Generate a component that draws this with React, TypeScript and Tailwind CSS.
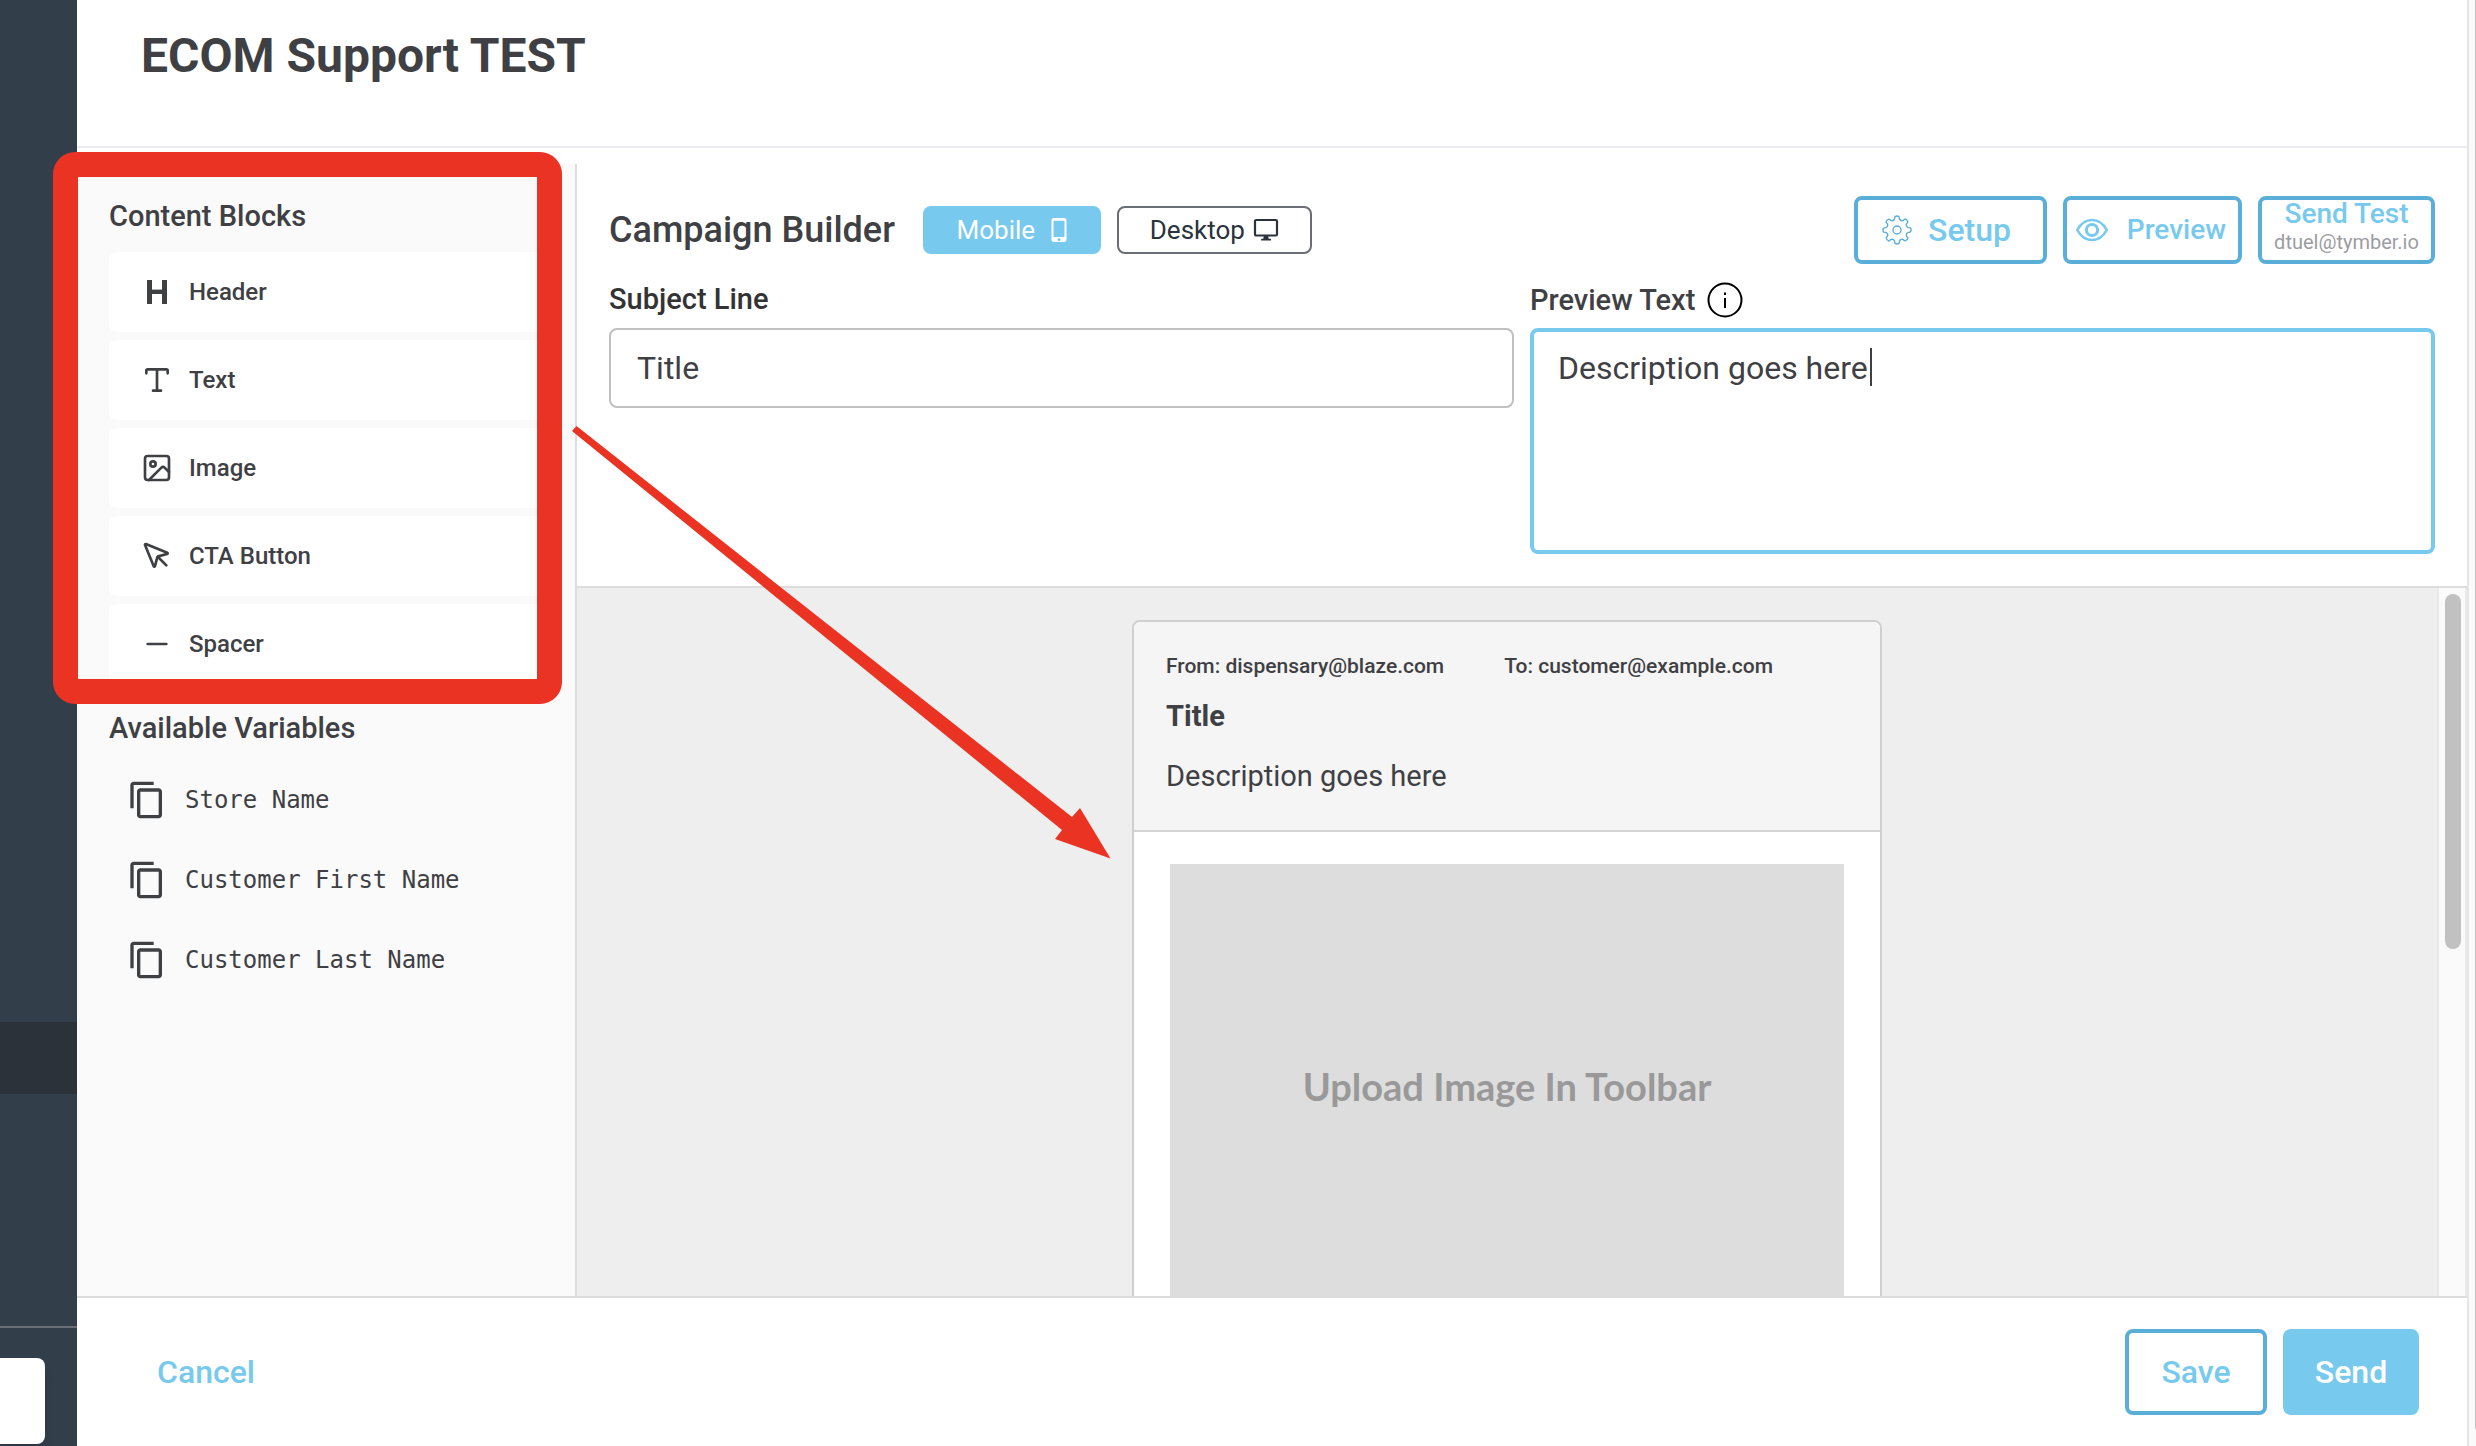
import React from "react";
import { Image as ImageIcon, Minus, MousePointer, Type } from "lucide-react";
import { MdContentCopy } from "react-icons/md";

function HeaderIcon() {
  return (
    <svg viewBox="0 0 32 32" className="size-8" fill="none" stroke="currentColor" aria-hidden="true">
      <path d="M8.5 4v24M23.5 4v24" strokeWidth="5" />
      <path d="M8 15.8h16" strokeWidth="4.4" />
    </svg>
  );
}

function PhoneIcon() {
  return (
    <svg viewBox="0 0 16 24" className="h-6 w-4" aria-hidden="true">
      <path
        fill="currentColor"
        fillRule="evenodd"
        d="M3 0h10a2.5 2.5 0 0 1 2.500 2.500v19a2.500 2.500 0 0 1-2.500 2.500H3a2.500 2.500 0 0 1-2.500-2.500v-19A2.500 2.500 0 0 1 3 0ZM3.200 2.800a.7.7 0 0 0-.7.7v14.700c0 .400.300.700.700.700h9.600a.7.7 0 0 0 .7-.7V3.500a.7.7 0 0 0-.7-.7ZM8 20a1.500 1.500 0 1 0 0 3 1.500 1.500 0 0 0 0-3Z"
      />
    </svg>
  );
}

function MonitorIcon() {
  return (
    <svg viewBox="0 0 26 24" className="h-6 w-[26px]" aria-hidden="true">
      <rect x="2" y="2" width="22" height="15.500" rx="1.200" fill="none" stroke="currentColor" strokeWidth="2.200" />
      <path d="M10.800 18h4.400l.5 2.800h1.800q.6 0 .6.700v1h-10v-1q0-.7.6-.7h1.600Z" fill="currentColor" />
    </svg>
  );
}

function gearOutline(): string {
  const at = (deg: number, r: number) => {
    const a = (deg * Math.PI) / 180;
    return `${(15 + r * Math.cos(a)).toFixed(2)} ${(15 + r * Math.sin(a)).toFixed(2)}`;
  };
  let d = `M${at(-9, 13.6)}`;
  for (let i = 0; i < 8; i++) {
    const a = i * 45;
    d += `Q${at(a, 14.6)} ${at(a + 8, 13.6)}`;
    d += `Q${at(a + 11, 12.6)} ${at(a + 12, 11.4)}`;
    d += `Q${at(a + 22.5, 9.4)} ${at(a + 33, 11.4)}`;
    d += `Q${at(a + 34, 12.6)} ${at(a + 36, 13.6)}`;
  }
  return d + "Z";
}

const gearPath = gearOutline();

function GearIcon() {
  return (
    <svg viewBox="0 0 30 30" className="size-[30px] text-[#5aafd9]" fill="none" stroke="currentColor" strokeWidth="1.400" aria-hidden="true">
      <path d={gearPath} strokeLinejoin="round" />
      <circle cx="15" cy="15" r="4" />
    </svg>
  );
}

function EyeIcon() {
  return (
    <svg viewBox="0 0 34 24" className="h-6 w-[34px]" fill="none" stroke="currentColor" aria-hidden="true">
      <path
        d="M2.200 12C5.800 5.400 11 2 17 2s11.200 3.400 14.800 10C28.200 18.600 23 22 17 22S5.800 18.600 2.200 12Z"
        strokeWidth="2.600"
        strokeLinejoin="round"
      />
      <circle cx="17" cy="12" r="5.600" strokeWidth="3" />
    </svg>
  );
}

function InfoIcon() {
  return (
    <svg viewBox="0 0 36 36" className="size-9 text-black" fill="none" stroke="currentColor" aria-hidden="true">
      <circle cx="18" cy="18" r="16.500" strokeWidth="2" />
      <path d="M18 16v10" strokeWidth="2" />
      <path d="M18 10.500v2.400" strokeWidth="2" />
    </svg>
  );
}

const blocks = [
  { label: "Header", icon: <HeaderIcon /> },
  { label: "Text", icon: <Type className="size-8" /> },
  { label: "Image", icon: <ImageIcon className="size-8" /> },
  { label: "CTA Button", icon: <MousePointer className="size-8" /> },
  { label: "Spacer", icon: <Minus className="size-8" /> },
];

const variables = ["Store Name", "Customer First Name", "Customer Last Name"];

function Rail() {
  return (
    <nav aria-label="Main" className="flex w-[77px] shrink-0 flex-col justify-end bg-[#333e4b]">
      <div className="h-[72px] bg-[#2c3239]" />
      <div className="h-[232px]" />
      <div className="border-t-2 border-[#686f79] pt-[30px] pb-0.5">
        <div className="h-[86px] w-[45px] rounded-r-lg bg-white shadow-lg" />
      </div>
    </nav>
  );
}

function Sidebar() {
  return (
    <aside className="w-[500px] shrink-0 border-r-2 border-[#dddddd] bg-[#fafafa] px-8 pt-9">
      <h2 className="mb-5 text-[29px] leading-8 font-medium">Content Blocks</h2>
      <ul className="flex flex-col gap-2">
        {blocks.map((b) => (
          <li key={b.label}>
            <button type="button" className="flex h-20 w-full cursor-grab items-center gap-4 rounded-lg bg-white pl-8 text-2xl font-medium">
              {b.icon}
              {b.label}
            </button>
          </li>
        ))}
      </ul>
      <h2 className="mt-7 mb-4 text-[29px] leading-8 font-medium">Available Variables</h2>
      <ul>
        {variables.map((v) => (
          <li key={v}>
            <button
              type="button"
              className="flex h-20 items-center gap-[18px] pl-[18px] font-['DejaVu_Sans_Mono',monospace] text-2xl"
            >
              <MdContentCopy className="size-10" />
              {v}
            </button>
          </li>
        ))}
      </ul>
    </aside>
  );
}

function Toolbar() {
  const outlined = "flex h-full items-center rounded-lg border-4 border-[#5aafd9] font-medium text-[#78c9ee]";
  return (
    <div className="flex h-[68px] items-center">
      <h2 className="mr-7 text-4xl leading-10 font-medium">Campaign Builder</h2>
      <div className="flex gap-4">
        <button type="button" aria-pressed="true" className="flex h-12 w-[178px] items-center justify-center gap-4 rounded-lg bg-[#78c9ee] text-[26px] text-white">
          Mobile
          <PhoneIcon />
        </button>
        <button type="button" aria-pressed="false" className="flex h-12 w-[195px] items-center justify-center gap-2 rounded-lg border-2 border-[#6a6d73] text-[26px] text-[#2a333c]">
          Desktop
          <MonitorIcon />
        </button>
      </div>
      <div className="ml-auto flex h-full gap-4">
        <button type="button" className={`${outlined} w-[193px] gap-4 pl-6 text-[32px]`}>
          <GearIcon />
          Setup
        </button>
        <button type="button" className={`${outlined} w-[179px] justify-between pr-3 pl-2 text-[28px]`}>
          <EyeIcon />
          Preview
        </button>
        <button type="button" className={`${outlined} w-[177px] flex-col text-[28px] leading-7`}>
          Send Test
          <span className="text-xl leading-7 font-normal text-[#9b9da2]">dtuel@tymber.io</span>
        </button>
      </div>
    </div>
  );
}

function Fields() {
  return (
    <div className="mt-5 grid grid-cols-2 gap-4">
      <div>
        <label htmlFor="subject" className="mb-3 flex h-8 items-center text-[29px] font-medium text-[#333333]">
          Subject Line
        </label>
        <input
          id="subject"
          type="text"
          defaultValue="Title"
          className="h-20 w-full rounded-lg border-2 border-[#c0c0c0] px-[26px] text-[32px] outline-none"
        />
      </div>
      <div>
        <div className="mb-3 flex h-8 items-center gap-3">
          <label htmlFor="preview" className="text-[29px] leading-8 font-medium">
            Preview Text
          </label>
          <InfoIcon />
        </div>
        <div className="relative">
          <textarea
            id="preview"
            defaultValue="Description goes here"
            className="block h-[226px] w-full resize-none rounded-lg border-4 border-[#78c9ee] px-6 py-4 text-[32px] leading-10 outline-none"
          />
          <span aria-hidden="true" className="absolute top-5 left-[340px] h-[38px] w-0.5 bg-[#3f4044]" />
        </div>
      </div>
    </div>
  );
}

function Canvas() {
  return (
    <div className="flex min-h-0 flex-1 bg-[#eeeeee]">
      <div className="flex-1 overflow-hidden pt-8">
        <article className="mx-auto w-[750px] rounded-t-lg border-2 border-[#cfcfcf] bg-white">
          <header className="rounded-t-md border-b-2 border-[#d4d4d4] bg-[#f5f5f5] px-8 pt-8 pb-[38px]">
            <div className="flex gap-15 text-[21px] leading-6 font-medium">
              <span>From: dispensary@blaze.com</span>
              <span>To: customer@example.com</span>
            </div>
            <h3 className="mt-[22px] text-[29px] leading-8 font-bold">Title</h3>
            <p className="mt-7 text-[29px] leading-8">Description goes here</p>
          </header>
          <div className="px-9 py-8">
            <div className="flex h-[444px] items-center justify-center bg-[#dddddd] font-[Lato,sans-serif] text-[38px] font-bold text-[#999999]">
              Upload Image In Toolbar
            </div>
          </div>
        </article>
      </div>
      <div className="w-[30px] shrink-0 border-x-2 border-[#e8e8e8] bg-[#fafafa] px-[6px] pt-1.5">
        <div className="h-[355px] w-4 rounded-full bg-[#c1c1c1]" />
      </div>
    </div>
  );
}

function Annotations() {
  return (
    <div aria-hidden="true" className="pointer-events-none">
      <div className="absolute top-[152px] left-[53px] h-[552px] w-[509px] rounded-[22px] border-[25px] border-[#ea3323]" />
      <svg viewBox="0 0 540 434" className="absolute top-[426px] left-[572px] h-[434px] w-[540px]">
        <path d="M4.500 0 500 391 508 382 538.500 432.500 483 413 490 404 0 5Z" fill="#ea3323" />
      </svg>
    </div>
  );
}

export default function App() {
  return (
    <div className="relative flex h-screen min-h-[1200px] overflow-hidden bg-white font-[Roboto,sans-serif] text-[#3f4044]">
      <Rail />
      <div className="flex min-w-0 flex-1 flex-col">
        <header className="h-[148px] shrink-0 border-b-2 border-[#ebecf2] px-16 pt-7">
          <h1 className="text-5xl leading-14 font-bold">ECOM Support TEST</h1>
        </header>
        <main className="flex min-h-0 flex-1 pt-4">
          <Sidebar />
          <section className="flex min-w-0 flex-1 flex-col">
            <div className="border-b-2 border-[#dddddd] p-8">
              <Toolbar />
              <Fields />
            </div>
            <Canvas />
          </section>
        </main>
        <footer className="flex h-[150px] shrink-0 items-center border-t-2 border-[#dddddd] pr-12 pl-20 text-[32px] font-medium">
          <button type="button" className="text-[#78c9ee]">
            Cancel
          </button>
          <button type="button" className="ml-auto h-[86px] w-[142px] rounded-lg border-4 border-[#5aafd9] text-[#78c9ee]">
            Save
          </button>
          <button type="button" className="ml-4 h-[86px] w-[136px] rounded-lg bg-[#78c9ee] text-white">
            Send
          </button>
        </footer>
      </div>
      <div className="w-[9px] shrink-0 overflow-hidden border-l-2 border-[#e5e5e5] bg-[#fafafa] pl-1.5">
        <div className="h-[calc(100%-12px)] w-4 rounded-b-full bg-[#c1c1c1]" />
      </div>
      <Annotations />
    </div>
  );
}
